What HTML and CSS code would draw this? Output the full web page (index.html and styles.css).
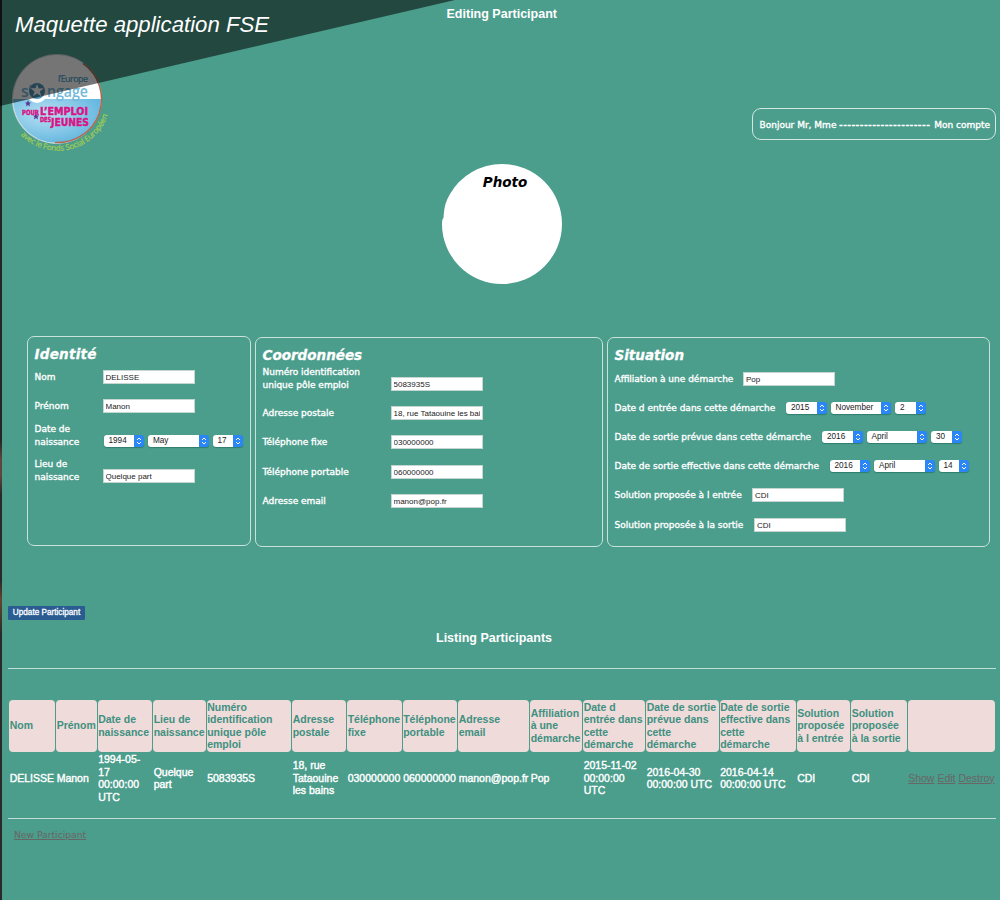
FILE: index.html
```html
<!DOCTYPE html>
<html lang="fr">
<head>
<meta charset="utf-8">
<title>Maquette application FSE</title>
<link rel="stylesheet" href="styles.css">
</head>
<body>
<div class="page">
  <header class="top">
    <h1 class="page-title">Editing Participant</h1>
    <svg class="logo" width="112" height="112" viewBox="0 0 112 112">
      <defs>
        <radialGradient id="sky" cx=".38" cy=".3" r=".65"><stop offset="0" stop-color="#b9e0f3"/><stop offset="1" stop-color="#5db4de"/></radialGradient>
        <clipPath id="disc"><circle cx="47" cy="50" r="44"/></clipPath>
        <path id="arc" d="M10.500 86A52.500 52.500 0 0 0 100.500 50"/>
      </defs>
      <circle cx="47" cy="50" r="45" fill="#c9d5d2"/>
      <circle cx="47" cy="50" r="44" fill="#fff"/>
      <rect x="0" y="50" width="96" height="50" fill="url(#sky)" clip-path="url(#disc)"/>
      <path d="M73 14.500A43.500 43.500 0 0 1 45 93.500" fill="none" stroke="#b4674e" stroke-width="1.500"/>
      <circle cx="27" cy="44" r="10" fill="#fff"/>
      <circle cx="27" cy="42" r="8" fill="#5295b6"/>
      <path d="M27 35l1.700 4.500 5-.2-3.900 3.200 1.600 4.800-4.300-2.800-4.100 2.800 1.500-4.800-3.800-3.200h4.800z" fill="#fff"/>
      <text class="logo-europe" x="48" y="33" textLength="30">l’Europe</text>
      <text class="logo-engage" x="11" y="48">s’</text>
      <text class="logo-engage" x="37" y="48" textLength="41" lengthAdjust="spacingAndGlyphs">ngage</text>
      <path d="M18 51l1 2.500h2l-1.500 1.500.5 2.500-2-1.500-2 1.500.5-2.500-1.500-1.500h2zM26 64l1 2.500h2l-1.500 1.500.5 2.500-2-1.500-2 1.500.5-2.500-1.500-1.500h2z" fill="#583b98"/>
      <text class="logo-pink logo-small" x="12" y="66" textLength="17" lengthAdjust="spacingAndGlyphs">POUR</text>
      <text class="logo-pink" x="30" y="66" textLength="48" lengthAdjust="spacingAndGlyphs">L’EMPLOI</text>
      <text class="logo-pink logo-small" x="30" y="72.500" textLength="11" lengthAdjust="spacingAndGlyphs">DES</text>
      <text class="logo-pink" x="41" y="76.500" textLength="38" lengthAdjust="spacingAndGlyphs">JEUNES</text>
      <text class="logo-arc"><textPath href="#arc" textLength="107">avec le Fonds Social Européen</textPath></text>
    </svg>
    <div class="account"><span>Bonjour Mr, Mme <span class="dashes">----------------------</span></span> <span>Mon compte</span></div>
    <div class="banner">
      <svg width="460" height="107" viewBox="0 0 460 107"><path d="M0 0H455L0 106Z" fill="#000" fill-opacity=".54"/></svg>
      <span class="banner-text">Maquette application FSE</span>
    </div>
  </header>

  <section class="photo">
    <svg width="120" height="120" viewBox="0 0 120 120"><path d="M60 0A60 60 0 1 1 0 60Q0 55 1.500 54Q2 45 3.500 40Q5 35 8 30A60 60 0 0 1 60 0Z" fill="#fff"/></svg>
    <h2 class="photo-label">Photo</h2>
  </section>

  <form class="cards">
    <fieldset class="card identity">
      <h2>Identité</h2>
      <div class="row"><label>Nom</label><input value="DELISSE"></div>
      <div class="row"><label>Prénom</label><input value="Manon"></div>
      <div class="row date"><label class="two">Date de<br>naissance</label><span class="select year">1994</span><span class="select month">May</span><span class="select day">17</span></div>
      <div class="row place"><label class="two">Lieu de<br>naissance</label><input value="Quelque part"></div>
    </fieldset>
    <fieldset class="card contact">
      <h2>Coordonnées</h2>
      <div class="row"><label class="two">Numéro identification<br>unique pôle emploi</label><input value="5083935S"></div>
      <div class="row"><label>Adresse postale</label><input value="18, rue Tataouine les bains"></div>
      <div class="row"><label>Téléphone fixe</label><input value="030000000"></div>
      <div class="row"><label>Téléphone portable</label><input value="060000000"></div>
      <div class="row"><label>Adresse email</label><input value="manon@pop.fr"></div>
    </fieldset>
    <fieldset class="card situation">
      <h2>Situation</h2>
      <div class="row"><label class="w-affiliation">Affiliation à une démarche</label><input value="Pop"></div>
      <div class="row"><label class="w-entry">Date d entrée dans cette démarche</label><span class="select year">2015</span><span class="select month">November</span><span class="select day">2</span></div>
      <div class="row"><label class="w-planned">Date de sortie prévue dans cette démarche</label><span class="select year">2016</span><span class="select month">April</span><span class="select day">30</span></div>
      <div class="row"><label class="w-actual">Date de sortie effective dans cette démarche</label><span class="select year">2016</span><span class="select month">April</span><span class="select day">14</span></div>
      <div class="row"><label class="w-in">Solution proposée à l entrée</label><input value="CDI"></div>
      <div class="row"><label class="w-out">Solution proposée à la sortie</label><input value="CDI"></div>
    </fieldset>
  </form>

  <button class="update" type="button">Update Participant</button>
  <h2 class="list-title">Listing Participants</h2>

  <div class="listing">
    <div class="grid head">
      <div>Nom</div><div>Prénom</div><div>Date de<br>naissance</div><div>Lieu de<br>naissance</div>
      <div>Numéro<br>identification<br>unique pôle<br>emploi</div><div>Adresse<br>postale</div>
      <div>Téléphone<br>fixe</div><div>Téléphone<br>portable</div><div>Adresse<br>email</div>
      <div>Affiliation<br>à une<br>démarche</div><div>Date d<br>entrée dans<br>cette<br>démarche</div>
      <div>Date de sortie<br>prévue dans<br>cette<br>démarche</div><div>Date de sortie<br>effective dans<br>cette<br>démarche</div>
      <div>Solution<br>proposée<br>à l entrée</div><div>Solution<br>proposée<br>à la sortie</div><div></div>
    </div>
    <div class="grid body">
      <div>DELISSE</div><div>Manon</div><div>1994-05-<br>17<br>00:00:00<br>UTC</div><div>Quelque<br>part</div>
      <div>5083935S</div><div>18, rue<br>Tataouine<br>les bains</div><div>030000000</div><div>060000000</div>
      <div>manon@pop.fr</div><div>Pop</div><div>2015-11-02<br>00:00:00<br>UTC</div>
      <div>2016-04-30<br>00:00:00 UTC</div><div>2016-04-14<br>00:00:00 UTC</div><div>CDI</div><div>CDI</div>
      <div class="links"><span><a href="#">Show</a> <a href="#">Edit</a> <a href="#">Destroy</a></span></div>
    </div>
  </div>
  <a class="new-link" href="#">New Participant</a>
</div>
</body>
</html>
```
FILE: styles.css
```css
* { box-sizing: border-box; }
body {
  margin: 0;
  background: #4b9d8c;
  color: #fff;
  font-family: "Liberation Sans", Arial, sans-serif;
}
h1, h2 { margin: 0; }
.page {
  height: 900px;
  overflow: hidden;
  padding-left: 6px;
  background: linear-gradient(#252525 0 440px, #60473d 460px 475px, #292929 495px 580px, #65452f 600px, #292929 635px) 0 0 / 2px 100% no-repeat;
}

.top {
  position: relative;
  display: grid;
  grid-template-columns: 1fr auto;
  grid-template-rows: 46px 1fr;
  height: 164px;
  padding-right: 4px;
}
.page-title {
  grid-column: 1 / 3;
  padding: 7px 0 0 1.500px;
  font-size: 12.500px;
  line-height: 15px;
  text-align: center;
}
.logo { margin: 3px 0 0 4px; }
.logo text { font-family: "Open Sans", sans-serif; }
.logo .logo-europe { font-size: 9px; fill: #4a9fc8; stroke: #4a9fc8; stroke-width: .2px; }
.logo .logo-engage { font-size: 16px; font-weight: 600; fill: #73b9da; }
.logo .logo-pink { font-family: "DejaVu Sans", sans-serif; font-size: 10.500px; font-weight: 700; fill: #d91486; stroke: #d91486; stroke-width: .5px; }
.logo .logo-small { font-size: 7px; }
.logo .logo-arc { font-size: 8px; fill: #a4cf51; stroke: #a4cf51; stroke-width: .2px; }
.account {
  display: flex;
  align-items: center;
  justify-content: space-between;
  width: 244.500px;
  height: 32px;
  margin-top: 62px;
  padding: 1px 5px 0 7px;
  border: 1px solid #d3e8e3;
  border-radius: 9px;
  font: 9px "DejaVu Sans", sans-serif;
  -webkit-text-stroke: .35px #fff;
  white-space: nowrap;
}
.dashes { letter-spacing: .9px; -webkit-text-stroke: .6px #fff; }
.banner { position: absolute; left: -6px; top: 0; }
.banner svg { display: block; }
.banner-text {
  position: absolute;
  left: 15px;
  top: 12px;
  font-size: 22.200px;
  font-style: italic;
  line-height: 25px;
  white-space: nowrap;
}

.photo { display: grid; justify-content: center; height: 171.500px; padding-right: 2px; }
.photo svg, .photo-label { grid-area: 1 / 1; }
.photo-label {
  padding: 10px 0 0 6px;
  color: #000;
  font: italic 700 13.500px/17px "DejaVu Sans", sans-serif;
  text-align: center;
}

.cards { display: flex; align-items: flex-start; gap: 3.500px; margin-left: 20.500px; }
.card {
  flex: none;
  height: 210px;
  margin: 1px 0 0;
  padding: 9.500px 0 0 7px;
  border: 1px solid #c9e2dc;
  border-radius: 7px;
  font: 9px/12.500px "DejaVu Sans", sans-serif;
  white-space: nowrap;
}
.card h2 { height: 17px; font: italic 700 13.500px/16px "DejaVu Sans", sans-serif; -webkit-text-stroke: .3px #fff; }
.identity { width: 224px; margin-top: 0; }
.identity h2 { letter-spacing: .25px; }
.contact { width: 348.500px; margin-left: .5px; }
.situation { width: 383.500px; }
.row { display: flex; align-items: flex-end; height: 29.200px; padding-bottom: 8px; }
.row label { flex: none; line-height: 13px; -webkit-text-stroke: .35px #fff; }
.row label.two { line-height: 12.500px; }
.identity label { width: 68px; }
.identity .row:nth-child(2) { height: 29px; }
.identity .date { height: 35px; }
.identity .place { height: 35px; }
.contact label { width: 128px; }
.contact .row:nth-child(2) { height: 35px; }
.situation .row:nth-child(2) { height: 29.700px; }
.situation .w-affiliation { width: 128.500px; }
.situation .w-entry { width: 170.500px; }
.situation .w-planned { width: 206.500px; }
.situation .w-actual { width: 214px; }
.situation .w-in { width: 137.500px; }
.situation .w-out { width: 139.500px; }
.row input {
  flex: none;
  width: 92px;
  height: 14px;
  margin: 0;
  padding: 1px 2px 0;
  border: 1px solid #c6d7d2;
  border-radius: 0;
  background: #fff;
  color: #222;
  font: 8px "Liberation Sans", Arial, sans-serif;
}
.select {
  flex: none;
  height: 12px;
  margin: 0 4px 1px 0;
  padding-left: 5px;
  border-radius: 3px;
  background: url("data:image/svg+xml,%3Csvg xmlns='http://www.w3.org/2000/svg' width='10' height='12'%3E%3Cpath fill='%232b87f5' d='M0 0h10v12H0z'/%3E%3Cpath d='M3 5l2-2 2 2M3 7l2 2 2-2' fill='none' stroke='white'/%3E%3C/svg%3E") right / 10px 12px no-repeat #fff;
  box-shadow: 0 1px 1px #2f7e6d;
  color: #222;
  font: 8.200px/12px "Liberation Sans", Arial, sans-serif;
}
.select:nth-child(2) { margin-left: 1px; }
.year { width: 40.500px; }
.month { width: 60.500px; }
.day { width: 30.500px; }

.update {
  display: block;
  width: 77px;
  height: 14px;
  margin: 59.500px 0 0 2px;
  padding: 0;
  border: 0;
  border-radius: 1px;
  background: #2a5c92;
  color: #fff;
  font: 8.200px/14px "Liberation Sans", Arial, sans-serif;
  -webkit-text-stroke: .3px #fff;
  white-space: nowrap;
}
.list-title { height: 26.500px; margin-top: 11px; padding-right: 18px; font-size: 12.500px; line-height: 15px; text-align: center; }
.listing {
  height: 151px;
  margin: 10px 4px 0 2px;
  padding: 31px 0 0 1px;
  border: solid #c3ddd7;
  border-width: 1px 0;
}
.grid {
  display: grid;
  grid-template-columns: 46px 40.500px 54.500px 52.500px 84.500px 54px 54.500px 54.500px 71px 52px 62px 72.500px 76px 53.500px 55.500px 87px;
  column-gap: 1px;
  font-size: 10.500px;
  line-height: 12.500px;
  white-space: nowrap;
}
.grid > div { display: flex; align-items: center; min-width: 0; height: 52px; padding-left: .7px; }
.head { color: #3f9080; font-weight: 700; }
.head > div { border-radius: 4px; background: #eedbda; }
.body { -webkit-text-stroke: .4px #fff; }
.body > div { padding-top: 1px; }
.body .links { -webkit-text-stroke: 0; }
.links a, .new-link { color: #696565; }
.new-link { display: block; margin: 9px 0 0 8px; font: 9.200px/13px "DejaVu Sans", sans-serif; }
```
